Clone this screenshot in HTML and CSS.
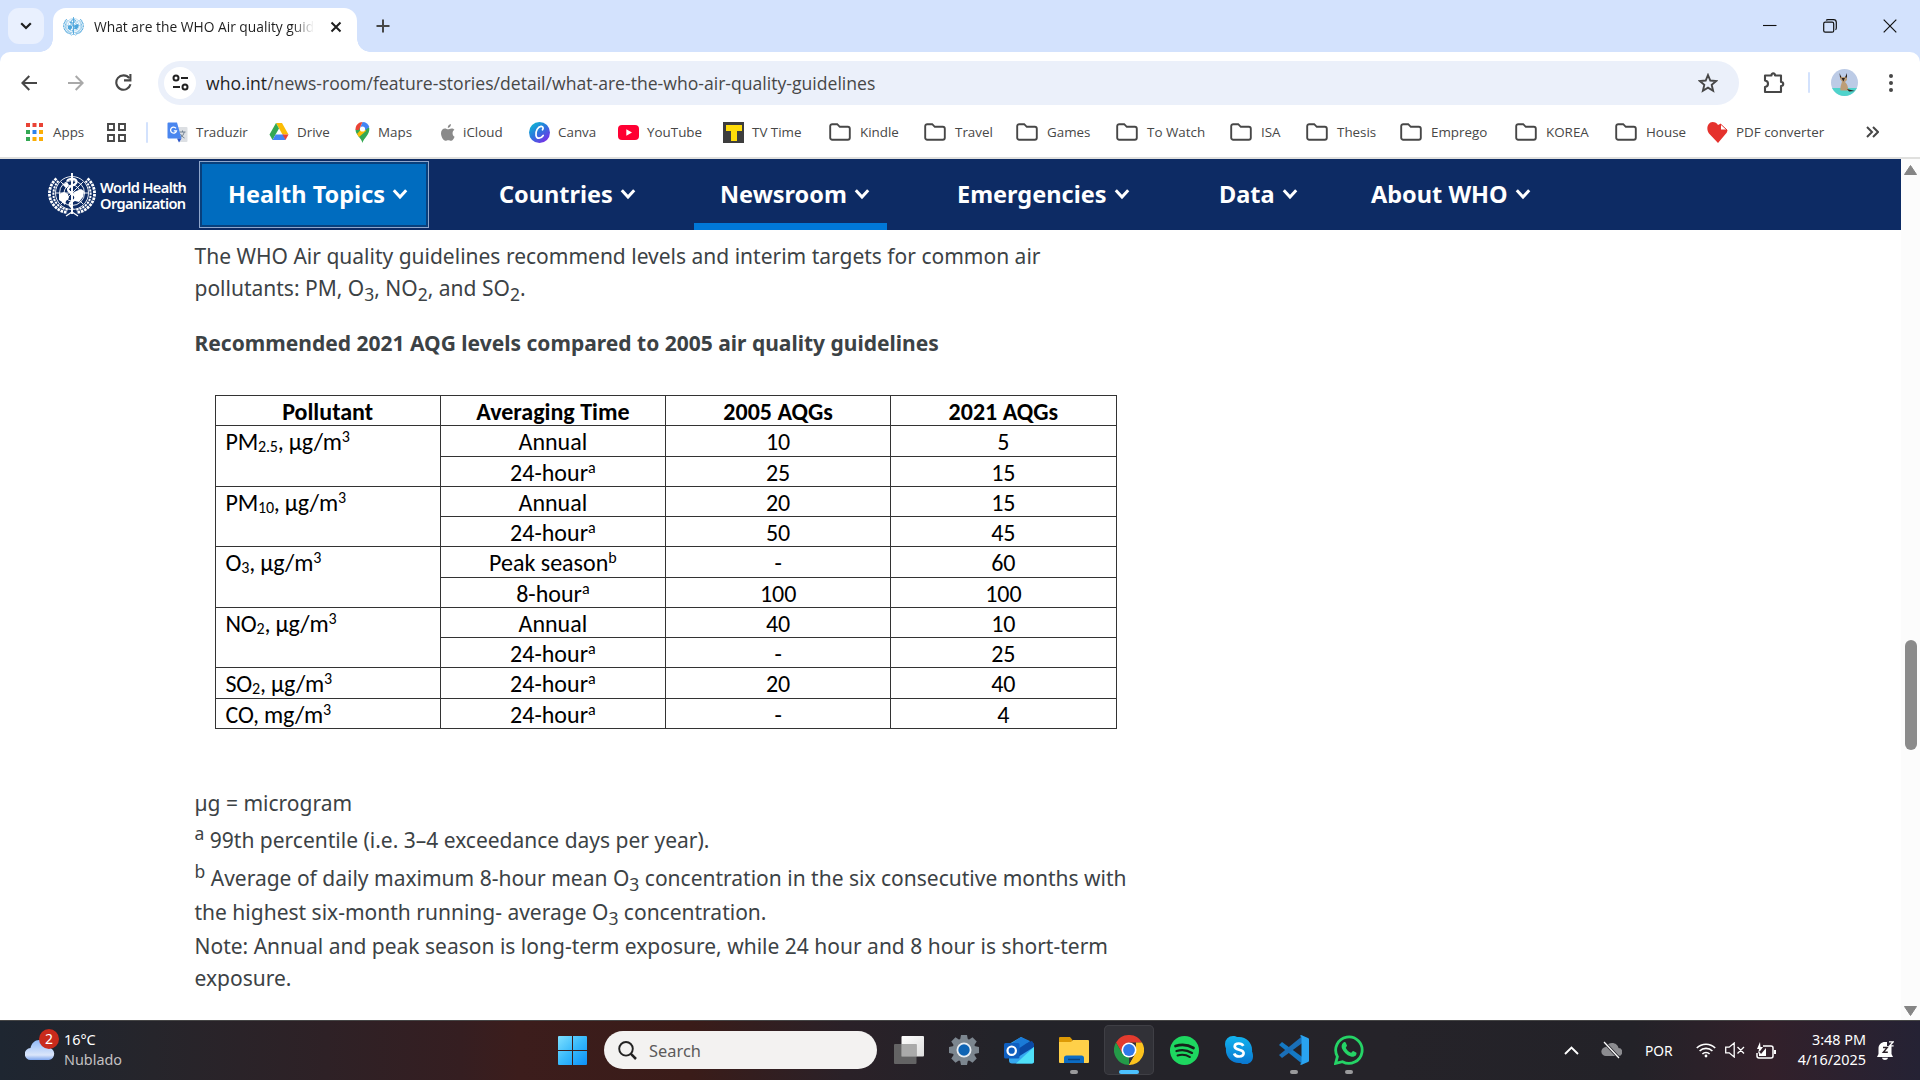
FILE: index.html
```
<!DOCTYPE html>
<html lang="en">
<head>
<meta charset="utf-8">
<title>What are the WHO Air quality guidelines?</title>
<link rel="stylesheet" href="styles.css">
</head>
<body>
<svg class="defs" width="0" height="0">
  <defs>
    <symbol id="folder" viewBox="0 0 22 18"><path d="M1.2 3.2a2 2 0 0 1 2-2h5l2.6 2.6h8a2 2 0 0 1 2 2v8.900a2 2 0 0 1-2 2H3.200a2 2 0 0 1-2-2z" fill="none" stroke="#474747" stroke-width="1.9"/></symbol>
    <symbol id="chev" viewBox="0 0 16 12"><path d="M1.800 2.300L8 9l6.200-6.700" fill="none" stroke="#fff" stroke-width="3"/></symbol>
    <symbol id="emblem" viewBox="0 0 48 44">
      <g fill="none" stroke="currentColor">
        <g stroke-width=".9"><circle cx="24" cy="20" r="16.500"/><circle cx="24" cy="20" r="12.500"/><circle cx="24" cy="20" r="8"/><path d="M8 20h32M24 4v34M13 9l22 22M35 9L13 31"/></g>
        <path d="M8.500 5.500C0 13-1 25 6.500 33c3.500 4 8 6 13 6.500" stroke-width="2.800" stroke-dasharray="2.600 .9"/>
        <path d="M10.500 8C4.500 14 3.500 25 9 31c3.500 4 7 5 11 6" stroke-width="2" stroke-dasharray="2.200 1"/>
        <path d="M39.500 5.500C48 13 49 25 41.500 33c-3.500 4-8 6-13 6.500" stroke-width="2.800" stroke-dasharray="2.600 .9"/>
        <path d="M37.500 8c6 6 7 17 1.500 23-3.500 4-7 5-11 6" stroke-width="2" stroke-dasharray="2.200 1"/>
        <path d="M18 43l6-4 6 4" stroke-width="1.300"/>
        <path d="M24 0v41" stroke-width="1.900"/>
        <path d="M19 8c2-3 9-3 9.500.500C29 13 20 12 20 16.500c0 4 7.500 3.500 7.500 8 0 4-6 3.500-6 7 0 2 3 2.500 3 4.500" stroke-width="2.100"/>
      </g>
      <path d="M11 21l5-2 4 2 1 4-3 3-1 4-3-3-3-2zM26 19l7-3 3 2-1 6-4 5-4-1zM15 12l4-3 2 3-3 3z" fill="currentColor"/>
    </symbol>
  </defs>
</svg>

<header class="browser">
  <div class="tabstrip">
    <button class="tab-search"><svg width="12" height="8" viewBox="0 0 12 8"><path d="M1.200 1.200L6 6l4.800-4.800" fill="none" stroke="#1f1f1f" stroke-width="2.200"/></svg></button>
    <div class="tab">
      <svg class="favicon" width="21" height="19"><use href="#emblem"/></svg>
      <span class="tab-title">What are the WHO Air quality guidelines?</span>
      <svg class="tab-close" width="12" height="12" viewBox="0 0 12 12"><path d="M1.500 1.500l9 9m0-9l-9 9" stroke="#1f1f1f" stroke-width="2"/></svg>
    </div>
    <svg class="newtab" width="14" height="14" viewBox="0 0 14 14"><path d="M7 .5v13M.5 7h13" stroke="#474747" stroke-width="2"/></svg>
    <div class="winctl">
      <svg width="14" height="14" viewBox="0 0 14 14"><path d="M0 6.500h13.500" stroke="#111" stroke-width="1.100"/></svg>
      <svg width="14" height="14" viewBox="0 0 14 14" fill="none" stroke="#111" stroke-width="1.200"><rect x=".7" y="3.200" width="10" height="10" rx="1.500"/><path d="M3.200 1.500C3.500.9 4 .7 5 .7h5.500c2 0 2.800.8 2.800 2.800V9c0 1-.3 1.400-.8 1.800"/></svg>
      <svg width="14" height="14" viewBox="0 0 14 14"><path d="M.7.7l12.600 12.600M13.300.7L.7 13.300" stroke="#111" stroke-width="1.200"/></svg>
    </div>
  </div>

  <div class="toolbar">
    <div class="navbtns">
      <svg width="16" height="16" viewBox="0 0 16 16" fill="none" stroke="#474747" stroke-width="2"><path d="M16 8H1.500M8.300 1L1.400 8l6.900 7"/></svg>
      <svg width="16" height="16" viewBox="0 0 16 16" fill="none" stroke="#a9a9a9" stroke-width="2"><path d="M0 8h14.500M7.700 1l6.900 7-6.900 7"/></svg>
      <svg width="17" height="17" viewBox="0 0 17 17" fill="none" stroke="#474747" stroke-width="2.100"><path d="M15.500 10.300a7.200 7.200 0 1 1-1.300-6.200"/><path d="M15.400 0v6.400H9" /></svg>
    </div>
    <div class="omnibox">
      <span class="site-info"><svg width="17" height="17" viewBox="0 0 17 17" fill="none" stroke="#222" stroke-width="2"><circle cx="4" cy="4" r="2.500"/><path d="M9 4h7M1 13h7"/><circle cx="13" cy="13" r="2.500"/></svg></span>
      <span class="url"><b>who.int</b>/news-room/feature-stories/detail/what-are-the-who-air-quality-guidelines</span>
      <svg class="star" width="20" height="20" viewBox="0 0 20 20"><path d="M10 2l2.300 5.500 5.900.5-4.500 3.900 1.400 5.800L10 14.600l-5.100 3.100 1.400-5.800L1.800 8l5.900-.5z" fill="none" stroke="#474747" stroke-width="1.900"/></svg>
    </div>
    <svg class="ext" width="22" height="23" viewBox="0 0 22 23"><path d="M2 4.500h6.500C8 1.700 12.500 1.700 12 4.500h6V11c3 0 3 4 0 4v6H2v-5c4-.5 4-6 0-6.500z" fill="none" stroke="#474747" stroke-width="2.100" stroke-linejoin="round"/></svg>
    <i class="sep"></i>
    <svg class="avatar" width="27" height="27" viewBox="0 0 27 27"><defs><clipPath id="av"><circle cx="13.500" cy="13.500" r="13.500"/></clipPath></defs><g clip-path="url(#av)"><path fill="#bccbe6" d="M0 0h27v27H0z"/><path fill="#4fd3cb" d="M0 19h27v8H0z"/><path d="M9 7l2 1h3l2-1v4l-2 2c2.500 2 3 5 3 7l2 1.500H9.500c-.5-4 1.500-8 1.500-9L9 10z" fill="#bd9d77"/><path d="M8.500 4l2 4.500H9zM16 4l-2 4.500h2zM10.500 9h3.500l-1.700 3.500zM16 20l8 2-6 .5z" fill="#2b2320"/></g></svg>
    <svg class="menu" width="4" height="18" viewBox="0 0 4 18" fill="#474747"><circle cx="2" cy="2" r="2"/><circle cx="2" cy="9" r="2"/><circle cx="2" cy="16" r="2"/></svg>
  </div>

  <nav class="bookmarks">
    <a class="apps"><svg width="17" height="18" viewBox="0 0 17 18"><path fill="#e94235" d="M0 0h4v4H0zM6.500 0h4v4h-4zM13 0h4v4h-4z"/><path fill="#34a853" d="M0 7h4v4H0zM0 14h4v4H0z"/><path fill="#2b82ee" d="M6.500 7h4v4h-4z"/><path fill="#fbae06" d="M13 7h4v4h-4zM6.500 14h4v4h-4zM13 14h4v4h-4z"/></svg>Apps</a>
    <a><svg width="19" height="19" viewBox="0 0 19 19" fill="none" stroke="#474747" stroke-width="1.900"><path d="M1 1h6v6H1zM12 1h6v6h-6zM1 12h6v6H1zM12 12h6v6h-6z"/></svg></a>
    <i class="sep"></i>
    <a><svg width="21" height="21" viewBox="0 0 21 21"><path fill="#dcdfe3" d="M8 5h11.500a1 1 0 0 1 1 1v13a1 1 0 0 1-1 1H12z"/><path d="M12.500 10h6M15.500 8.500V10m1.700 0c-.5 2.500-2 4.500-3.700 5.500m0-3.500c.8 1.500 2 3 4 4" stroke="#6f7f90" fill="none"/><path fill="#4a86ef" d="M1.500.5H10l4.500 16H1.500a1 1 0 0 1-1-1v-14a1 1 0 0 1 1-1z"/><path fill="#2d57c9" d="M10 16.500h4.500L12 20.500z"/><path d="M9 6.300a3 3 0 1 0 .5 2.500H6.800" fill="none" stroke="#fff" stroke-width="1.300"/></svg>Traduzir</a>
    <a><svg width="20" height="18" viewBox="0 0 20 18"><path fill="#fbbc05" d="M7 0h6l6.500 11.500h-6z"/><path fill="#34a853" d="M7 0l3 5.500L3.500 17 .5 11.500z"/><path fill="#4285f4" d="M6.700 11.500h8L16.500 17h-13z"/><path fill="#ea4335" d="M13.500 11.500h6l-3 5.500z"/></svg>Drive</a>
    <a><svg width="15" height="21" viewBox="0 0 15 21"><path fill="#34a853" d="M7.500 21C6.500 16 .5 13 .5 7.500L11 3l3.300 3C15 13 8.500 16 7.500 21z"/><path fill="#fbbc05" d="M2 12L9 4l2 5-7 6z"/><path fill="#4285f4" d="M7.500 0c3.500 0 6 2 6.800 5L9 9 5 6z"/><path fill="#ea4335" d="M7.500 0L4 8 .6 8C0 3 4 0 7.500 0z"/><circle cx="7.500" cy="7" r="2.600" fill="#fff"/></svg>Maps</a>
    <a><svg width="14" height="17" viewBox="0 0 14 17" fill="#8a8a8a"><path d="M9.900 0c.2 2-1.300 3.800-3.100 3.900C6.600 2 8.200.2 9.900 0zM13.600 12.800c-.8 2-2 4-3.500 4-1.100 0-1.500-.6-2.800-.6s-1.800.6-2.800.6C2.300 16.800 0 12.500 0 9.300c0-3 1.900-4.800 3.900-4.800 1.300 0 2.300.8 3.200.8.800 0 2-.9 3.600-.9 1 0 2 .5 2.700 1.400-2.600 1.500-2.200 5.900.2 7z"/></svg>iCloud</a>
    <a><svg width="21" height="21" viewBox="0 0 21 21"><defs><linearGradient id="cv" x1="0" y1="0" x2=".8" y2="1"><stop stop-color="#07c6d0"/><stop offset=".5" stop-color="#2a78dd"/><stop offset="1" stop-color="#7d2ae8"/></linearGradient></defs><circle cx="10.500" cy="10.500" r="10.500" fill="url(#cv)"/><path d="M13.500 7.800c1.300-1.800.4-3.700-1.500-3.500-3 .4-5.700 5-5 9 .7 4 5 3.700 7.200.2" fill="none" stroke="#fff" stroke-width="1.700" stroke-linecap="round"/></svg>Canva</a>
    <a><svg width="21" height="15" viewBox="0 0 21 15"><rect width="21" height="15" rx="4" fill="#f03"/><path fill="#fff" d="M8.300 4.300l5.700 3.200-5.700 3.200z"/></svg>YouTube</a>
    <a><svg width="21" height="21" viewBox="0 0 21 21"><path fill="#3d3d3d" d="M0 0h21v21H0z"/><path fill="#ffdc0a" d="M3 3h16v6h-5v10H8V9H3z"/></svg>TV Time</a>
    <a class="dir"><svg width="22" height="18"><use href="#folder"/></svg>Kindle</a>
    <a class="dir"><svg width="22" height="18"><use href="#folder"/></svg>Travel</a>
    <a class="dir"><svg width="22" height="18"><use href="#folder"/></svg>Games</a>
    <a class="dir"><svg width="22" height="18"><use href="#folder"/></svg>To Watch</a>
    <a class="dir"><svg width="22" height="18"><use href="#folder"/></svg>ISA</a>
    <a class="dir"><svg width="22" height="18"><use href="#folder"/></svg>Thesis</a>
    <a class="dir"><svg width="22" height="18"><use href="#folder"/></svg>Emprego</a>
    <a class="dir"><svg width="22" height="18"><use href="#folder"/></svg>KOREA</a>
    <a class="dir"><svg width="22" height="18"><use href="#folder"/></svg>House</a>
    <a><svg width="21" height="21" viewBox="0 0 21 21"><path fill="#e5322d" d="M11 21L2 11.500C-1.500 7 1 0 5.500 0 8 0 10 1.200 11 3l2-1v6h7.500c-.3 2-.8 2.800-1.500 3.500z"/><path d="M13.500 2v6h6.500z" fill="#fff" stroke="#e5322d"/></svg>PDF converter</a>
    <a><svg width="13" height="12" viewBox="0 0 13 12" fill="none" stroke="#474747" stroke-width="2"><path d="M1 1l5 5-5 5M7 1l5 5-5 5"/></svg></a>
  </nav>
</header>

<div class="viewport">
  <div class="page">
    <nav class="who-nav">
      <a class="who-logo"><svg width="48" height="44"><use href="#emblem"/></svg><span>World Health<br>Organization</span></a>
      <a class="item focused">Health Topics<svg width="16" height="12"><use href="#chev"/></svg></a>
      <a class="item">Countries<svg width="16" height="12"><use href="#chev"/></svg></a>
      <a class="item current">Newsroom<svg width="16" height="12"><use href="#chev"/></svg></a>
      <a class="item">Emergencies<svg width="16" height="12"><use href="#chev"/></svg></a>
      <a class="item">Data<svg width="16" height="12"><use href="#chev"/></svg></a>
      <a class="item">About WHO<svg width="16" height="12"><use href="#chev"/></svg></a>
    </nav>
    <main class="article">
      <p>The WHO Air quality guidelines recommend levels and interim targets for common air<br>pollutants: PM, O<sub>3</sub>, NO<sub>2</sub>, and SO<sub>2</sub>.</p>
      <h2>Recommended 2021 AQG levels compared to 2005 air quality guidelines</h2>
      <div class="aqg">
        <div class="th">Pollutant</div><div class="th">Averaging Time</div><div class="th">2005 AQGs</div><div class="th">2021 AQGs</div>
        <div class="pol two">PM<sub>2.5</sub>, µg/m<sup>3</sup></div><div>Annual</div><div>10</div><div>5</div>
        <div>24-hour<sup>a</sup></div><div>25</div><div>15</div>
        <div class="pol two">PM<sub>10</sub>, µg/m<sup>3</sup></div><div>Annual</div><div>20</div><div>15</div>
        <div>24-hour<sup>a</sup></div><div>50</div><div>45</div>
        <div class="pol two">O<sub>3</sub>, µg/m<sup>3</sup></div><div>Peak season<sup>b</sup></div><div>-</div><div>60</div>
        <div>8-hour<sup>a</sup></div><div>100</div><div>100</div>
        <div class="pol two">NO<sub>2</sub>, µg/m<sup>3</sup></div><div>Annual</div><div>40</div><div>10</div>
        <div>24-hour<sup>a</sup></div><div>-</div><div>25</div>
        <div class="pol">SO<sub>2</sub>, µg/m<sup>3</sup></div><div>24-hour<sup>a</sup></div><div>20</div><div>40</div>
        <div class="pol">CO, mg/m<sup>3</sup></div><div>24-hour<sup>a</sup></div><div>-</div><div>4</div>
      </div>
      <p class="notes">µg = microgram<br><sup>a</sup> 99th percentile (i.e. 3–4 exceedance days per year).<br><sup>b</sup> Average of daily maximum 8-hour mean O<sub>3</sub> concentration in the six consecutive months with<br>the highest six-month running- average O<sub>3</sub> concentration.<br>Note: Annual and peak season is long-term exposure, while 24 hour and 8 hour is short-term<br>exposure.</p>
    </main>
  </div>
  <div class="scrollbar">
    <svg width="13" height="10" viewBox="0 0 13 10"><path d="M6.500 0.500L12.500 9.500H.5z" fill="#858585" stroke="#858585" stroke-linejoin="round"/></svg>
    <i class="thumb"></i>
    <svg width="13" height="10" viewBox="0 0 13 10"><path d="M6.500 9.500L.5.500h12z" fill="#858585" stroke="#858585" stroke-linejoin="round"/></svg>
  </div>
</div>

<footer class="taskbar">
  <div class="weather">
    <div class="cloud">
      <svg width="30" height="20" viewBox="0 0 30 20"><defs><linearGradient id="cl" x1="0" y1="0" x2="0" y2="1"><stop stop-color="#8fb9f8"/><stop offset=".75" stop-color="#dbe6fa"/><stop offset="1" stop-color="#7ea6ee"/></linearGradient></defs><path fill="url(#cl)" d="M6 20a6 6 0 0 1-.5-12C6.500 3 10 0 14 0c4.500 0 8 3 9 7.500A6.300 6.300 0 0 1 24 20z"/></svg>
      <span class="badge">2</span>
    </div>
    <div class="wtext"><span>16°C</span><span class="dim">Nublado</span></div>
  </div>
  <svg class="start" width="29" height="29" viewBox="0 0 29 29"><defs><linearGradient id="st" x1="0" y1="0" x2="1" y2="1"><stop stop-color="#7fe0ff"/><stop offset=".5" stop-color="#37b9fb"/><stop offset="1" stop-color="#0c90f8"/></linearGradient></defs><path fill="url(#st)" d="M0 1a1 1 0 0 1 1-1h13v14H0zM15 0h13a1 1 0 0 1 1 1v13H15zM0 15h14v14H1a1 1 0 0 1-1-1zM15 15h14v13a1 1 0 0 1-1 1H15z"/></svg>
  <div class="search"><svg width="19" height="19" viewBox="0 0 19 19" fill="none" stroke="#222"><circle cx="8" cy="7.800" r="6.800" stroke-width="1.900"/><path d="M12.700 12.700l5.300 5.300" stroke-width="2.500"/></svg>Search</div>
  <div class="tasks">
    <span><svg width="30" height="28" viewBox="0 0 30 28"><defs><linearGradient id="tv" x2="1" y2="1"><stop stop-color="#fff"/><stop offset="1" stop-color="#ddd"/></linearGradient></defs><rect x="7.500" width="22.500" height="20.500" rx="1" fill="url(#tv)"/><rect y="8" width="22.500" height="20" rx="1" fill="#6f6f6f" fill-opacity=".85"/><path d="M7.500 8h15v12.500h-15z" fill="#aaa"/></svg></span>
    <span><svg width="30" height="30" viewBox="0 0 30 30"><g fill="#7c868f"><circle cx="15" cy="15" r="11.500"/><g id="tooth"><path d="M12 0h6l1.200 6h-8.400zM12 30h6l1.200-6h-8.400z"/></g><use href="#tooth" transform="rotate(45 15 15)"/><use href="#tooth" transform="rotate(90 15 15)"/><use href="#tooth" transform="rotate(135 15 15)"/></g><circle cx="15" cy="15" r="7.500" fill="#e9eef3"/><circle cx="15" cy="15" r="5.700" fill="#0f64b4"/></svg></span>
    <span><svg width="30" height="27" viewBox="0 0 30 27"><path fill="#36a8f0" d="M5 7L17 0l13 7v17.500a2 2 0 0 1-2 2H8a3 3 0 0 1-3-3z"/><path fill="#0a4aa5" d="M11 9l17-5 2 3v3L14 20z"/><path fill="#1a7bd8" d="M8 6l9-6 9 4-12 8z"/><path fill="#4fe0f8" d="M30 10v14.500a2 2 0 0 1-2 2H12z"/><rect y="6" width="15.500" height="15.500" rx="1.500" fill="#0f5fc0"/><circle cx="7.700" cy="13.700" r="4.200" fill="none" stroke="#fff" stroke-width="2.200"/></svg></span>
    <span class="open"><svg width="30" height="26" viewBox="0 0 30 26"><path fill="#dd9a06" d="M0 1a1 1 0 0 1 1-1h10l2.500 3v4H0z"/><path fill="#ffd049" d="M0 5h12l2-2h15a1 1 0 0 1 1 1v21a1 1 0 0 1-1 1H1a1 1 0 0 1-1-1z"/><path fill="#0c6cc4" d="M5 26v-5a2.500 2.500 0 0 1 2.500-2.500h15A2.500 2.500 0 0 1 25 21v5z"/><path d="M9 22.500h12" stroke="#08427e" stroke-width="1.500"/></svg></span>
    <span class="active"><svg width="30" height="30" viewBox="0 0 30 30"><path fill="#e33b2e" d="M2 7.500A15 15 0 0 1 28 7.500H15L8.500 18.700z"/><path fill="#fcc31e" d="M28 7.500A15 15 0 0 1 15 30l6.500-11.200L22 7.500z"/><path fill="#249a48" d="M2 7.500l6.500 11.300 6.500 3.700L15 30A15 15 0 0 1 2 7.500z"/><path fill="#fcc31e" d="M21.500 18.800L15 30h1l8-10z"/><circle cx="15" cy="15" r="7.500" fill="#fff"/><circle cx="15" cy="15" r="5.900" fill="#2f78e8"/></svg></span>
    <span><svg width="29" height="29" viewBox="0 0 29 29"><circle cx="14.500" cy="14.500" r="14.500" fill="#1ed760"/><g fill="none" stroke="#15221a" stroke-linecap="round"><path d="M5.500 10c6-1.800 13-1 18 2" stroke-width="2.700"/><path d="M6.500 15c5-1.500 11-.8 15.500 1.900" stroke-width="2.300"/><path d="M7.500 19.500c4-1.200 9-.6 12.500 1.600" stroke-width="1.900"/></g></svg></span>
    <span><svg width="28" height="28" viewBox="0 0 28 28"><defs><linearGradient id="sk" x2="0" y2="1"><stop stop-color="#12b4ef"/><stop offset="1" stop-color="#0a75cf"/></linearGradient></defs><path fill="url(#sk)" d="M8 0c2 0 3 .5 4.500 1C21 0 28 7 27 15.500c.5 1 1 2.500 1 4.500a8 8 0 0 1-12.500 7C7 28 0 21 1 12.500.500 11 0 10 0 8a8 8 0 0 1 8-8z"/><path d="M18.300 9.800c-1-1.900-2.800-2.300-4.500-2.300-2.300 0-4.100 1.100-4.100 3 0 4.400 8.900 2 8.900 6.600 0 2.200-2 3.400-4.500 3.400-2.200 0-4.200-.9-5-3" fill="none" stroke="#fff" stroke-width="2.700"/></svg></span>
    <span class="open"><svg width="30" height="30" viewBox="0 0 30 30"><path d="M0 10l3-3L24 22.500v7z" fill="#1479c4"/><path d="M0 20l3 3L24 7.500v-7z" fill="#1a6fb8"/><path fill="#29a3f0" d="M22 0l7 3a1.500 1.500 0 0 1 1 1.500v21a1.500 1.500 0 0 1-1 1.500l-7 3-1-1 1.500-1V2L21 1z"/></svg></span>
    <span class="open"><svg width="30" height="30" viewBox="0 0 30 30"><path d="M1.600 28.400l1.800-6.800A13.200 13.200 0 1 1 8.500 26.700z" fill="none" stroke="#25d366" stroke-width="2.800"/><path d="M9.500 7.500c1-.8 2-.5 2.300.2l1.200 2.800c.2.600-1.400 2-1.200 2.400 1.200 2.300 2.900 3.900 5.200 4.900.6.200 1.700-1.900 2.200-1.700l3 1.500c.5.300.4 1.800-.3 2.700-1.200 1.400-3.200 1.800-5 1.200-4.500-1.500-7.300-4.300-8.900-8-.8-2-.4-4.500 1.500-6z" fill="#25d366"/></svg></span>
  </div>
  <div class="tray">
    <svg width="15" height="9" viewBox="0 0 15 9"><path d="M1 8l6.500-6.500L14 8" fill="none" stroke="#fff" stroke-width="1.900"/></svg>
    <svg width="21" height="18" viewBox="0 0 21 18"><path d="M5 15a4.500 4.500 0 0 1-.3-9C6 3 8.500 2 11 2c3.500 0 6 2.300 6.500 5A4 4 0 0 1 17 15z" fill="#8c8c90"/><path d="M3 1l15 16" stroke="#26252b" stroke-width="3"/><path d="M3 1l15 16" stroke="#fff" stroke-width="1.200"/></svg>
    <span class="lang">POR</span>
    <svg width="20" height="16" viewBox="0 0 20 16" fill="none" stroke="#fff" stroke-width="1.600"><path d="M.8 6a13 13 0 0 1 18.400 0M3.600 9a9 9 0 0 1 12.800 0M6.400 12a5 5 0 0 1 7.200 0"/><circle cx="10" cy="14" r="1.400" fill="#fff" stroke="none"/></svg>
    <svg width="20" height="16" viewBox="0 0 20 16" fill="none" stroke="#fff" stroke-width="1.300"><path d="M.7 5.200h3.500l5-4.200v14l-5-4.200H.7zM12.500 5l6.500 6.500m0-6.500l-6.500 6.500"/></svg>
    <svg width="20" height="17" viewBox="0 0 20 17"><path d="M7 4h8a2 2 0 0 1 2 2v8a2 2 0 0 1-2 2H3a2 2 0 0 1-2-2v-3" fill="none" stroke="#fff" stroke-width="1.500"/><path d="M18 8h2v4h-2zM3 14V9l2 3 5-6v8zM4 0L1 7h2l-1 5 5-7H4.500z" fill="#fff"/></svg>
    <div class="clock"><span>3:48 PM</span><span>4/16/2025</span></div>
    <svg width="17" height="19" viewBox="0 0 17 19"><path d="M1.500 13V7.500C1.500 3.500 4.500 1 8 1h2v4h4.500v8l1.500 3H0zM5 16.700h6c-.5 3-5.500 3-6 0z" fill="#fff"/><path d="M12 .8h4.200l-3.600 4h4" stroke="#fff" fill="none" stroke-width="1.300"/><path d="M6 6.500h4.300l-4 4.700h4.500" stroke="#2b2129" fill="none" stroke-width="1.400"/></svg>
  </div>
</footer>
</body>
</html>
```
FILE: styles.css
```
* { box-sizing: border-box; }
body {
  margin: 0;
  width: 1920px;
  height: 1080px;
  overflow: hidden;
  display: flex;
  flex-direction: column;
  background: #fff;
  font-family: "Noto Sans", "Open Sans", sans-serif;
}
.defs { position: absolute; }
svg { display: block; flex: none; }
button { border: 0; padding: 0; }

/* Browser chrome */
.browser {
  height: 159px;
  flex: none;
  background: #d3e2fd;
  border-bottom: 2px solid #e0e0de;
  font-family: "Open Sans", "Noto Sans", sans-serif;
}
.tabstrip { height: 52px; display: flex; align-items: center; padding-left: 8px; }
.tab-search {
  width: 36px; height: 36px;
  border-radius: 11px;
  background: #e9f0fe;
  display: grid;
  place-items: center;
}
.tab {
  position: relative;
  width: 304px; height: 44px;
  margin-left: 9px;
  align-self: flex-end;
  background: #fff;
  border-radius: 13px 13px 0 0;
  display: flex;
  align-items: center;
  padding: 0 0 7px 10px;
  font-size: 13.8px;
  color: #1f1f1f;
}
.tab::before, .tab::after {
  content: "";
  position: absolute;
  bottom: 0;
  width: 13px; height: 13px;
}
.tab::before { left: -13px; background: radial-gradient(circle at 0 0, transparent 12.5px, #fff 13px); }
.tab::after { right: -13px; background: radial-gradient(circle at 100% 0, transparent 12.5px, #fff 13px); }
.favicon { color: #4ea6dc; }
.tab-title {
  width: 220px;
  margin: 0 15px 0 10px;
  overflow: hidden;
  white-space: nowrap;
  -webkit-mask-image: linear-gradient(90deg, #000 90%, transparent);
  mask-image: linear-gradient(90deg, #000 90%, transparent);
}
.tab-close { margin-left: 1px; }
.newtab { margin-left: 19px; }
.winctl { margin-left: auto; display: flex; gap: 46px; padding-right: 23px; }

.toolbar {
  height: 60px;
  background: #fff;
  border-radius: 10px 10px 0 0;
  display: flex;
  align-items: center;
  padding-top: 1px;
}
.navbtns { width: 158px; display: flex; gap: 31px; padding-left: 21px; align-items: center; }
.omnibox {
  width: 1581px; height: 44px;
  border-radius: 22px;
  background: #ebf0fa;
  display: flex;
  align-items: center;
  padding: 0 21px 0 6px;
}
.site-info {
  width: 32px; height: 32px;
  border-radius: 50%;
  background: #fff;
  display: grid;
  place-items: center;
}
.url { margin-left: 10px; font-size: 17.6px; color: #474747; line-height: 24px; }
.url b { font-weight: 400; color: #1f1f1f; }
.star { margin-left: auto; }
.ext { margin-left: 24px; }
.sep { width: 2px; height: 21px; background: #d3e2fd; border-radius: 1px; }
.toolbar .sep { margin: 0 21px 0 23px; }
.menu { margin-left: 31px; }

.bookmarks {
  height: 45px;
  background: #fff;
  padding: 0 0 5px 26px;
  display: grid;
  grid-template-columns: 81px 39px 21px 102px 86px 86px 88px 89px 105px 106px 95px 92px 100px 114px 76px 94px 115px 100px 92px 159px 20px;
  align-items: center;
  font-size: 13.4px;
  color: #474747;
}
.bookmarks a { display: flex; align-items: center; gap: 8px; white-space: nowrap; }
.bookmarks .apps { gap: 10px; }
.bookmarks .dir { gap: 9px; }

/* Page */
.viewport { flex: 1; display: flex; min-height: 0; }
.page { width: 1901px; }
.who-nav {
  height: 71px;
  background: #0d2b64;
  display: grid;
  grid-template-columns: 199px 274px 221px 237px 262px 152px 260px;
  color: #fff;
}
.who-logo {
  display: flex;
  align-items: center;
  gap: 4px;
  padding-left: 48px;
  font-size: 14.6px;
  font-weight: 600;
  line-height: 16px;
  letter-spacing: -.6px;
}
.item {
  display: flex;
  align-items: center;
  gap: 7px;
  padding: 0 0 1px 26px;
  font-size: 23.5px;
  font-weight: 700;
  white-space: nowrap;
}
.focused {
  width: 230px; height: 67px;
  margin-top: 2px;
  padding: 0 0 1px 28px;
  border: 1px solid #8fa6cc;
  box-shadow: inset 0 0 0 2px #083f7c;
  background: #006cbf;
}
.current { width: 193px; box-shadow: inset 0 -7px #0078d8; }

.article {
  padding: 11px 0 0 194.5px;
  width: 1200px;
  font-size: 21px;
  line-height: 31.5px;
  color: #3c4245;
  white-space: nowrap;
}
.article p { margin: 0; }
.article h2 { margin: 17px 0 0; font-size: 21px; line-height: 32px; }
.aqg {
  display: grid;
  grid-template-columns: repeat(4, 225.25px);
  grid-template-rows: repeat(11, 30.24px);
  width: 902px;
  margin: 36px 0 0 20px;
  border: solid #333;
  border-width: 0 1px 1px 0;
  font: 24px/32px Carlito, Lato, sans-serif;
  color: #000;
}
.aqg div { border: solid #333; border-width: 1px 0 0 1px; text-align: center; }
.aqg .th { font-weight: 700; }
.aqg .pol { text-align: left; padding-left: 10px; letter-spacing: -.2px; }
.aqg .two { grid-row: span 2; }
.aqg sub, .aqg sup { font-size: 16px; line-height: 0; }
.aqg sub { vertical-align: -2px; }
.aqg sup { vertical-align: 8px; }
.article .notes { margin-top: 59px; }
.notes sup { line-height: 29px; }
.notes sub { line-height: 25px; }

.scrollbar {
  width: 19px;
  background: #fcfcfc;
  display: flex;
  flex-direction: column;
  align-items: center;
  padding: 6px 0 4px;
}
.thumb { width: 12px; height: 110px; margin: 465px 0 auto; border-radius: 6px; background: #8b8b8b; }

/* Taskbar */
.taskbar {
  height: 60px;
  flex: none;
  border-top: 1px solid #454545;
  padding-bottom: 1px;
  background: linear-gradient(90deg, #1e2631 0, #26252b 8%, #2e2126 17%, #351e21 24%, #3c1d1c 27%, #3a1c19 36%, #2a2128 44%, #232329 52%, #252329 72%, #232228 85%, #32202a 92%, #252234 100%);
  display: flex;
  align-items: center;
  color: #fff;
  font-size: 14.4px;
}
.weather { width: 558px; display: flex; padding-left: 25px; align-items: center; }
.cloud { position: relative; width: 39px; }
.badge {
  position: absolute;
  left: 14px; top: -11px;
  width: 20px; height: 20px;
  border-radius: 50%;
  background: #c92a1c;
  font-size: 14px;
  line-height: 20px;
  text-align: center;
}
.wtext, .clock { display: flex; flex-direction: column; line-height: 20px; padding-bottom: 1px; }
.dim { color: #c3c0c2; }
.search {
  width: 273px; height: 38px;
  margin-left: 17px;
  border-radius: 19px;
  background: #f3f2f1;
  display: flex;
  align-items: center;
  gap: 12px;
  padding-left: 14px;
  color: #5c5a5a;
  font-size: 16.4px;
}
.tasks { display: flex; gap: 5px; margin-left: 7px; }
.tasks span { position: relative; width: 50px; height: 50px; display: grid; place-items: center; border-radius: 5px; }
.tasks .active { background: #313137; box-shadow: inset 0 0 0 1px #3f3f45; }
.tasks .open::after, .tasks .active::after {
  content: "";
  position: absolute;
  left: 21px; bottom: 1px;
  width: 8px; height: 4px;
  border-radius: 2px;
  background: #9a9a9c;
}
.tasks .active::after { left: 15px; width: 20px; background: #4cc2ff; }
.tray { margin-left: auto; display: flex; align-items: center; padding-right: 26px; }
.tray svg:nth-of-type(2) { margin-left: 22px; }
.lang { width: 51px; margin-left: 23px; font-size: 13.8px; }
.tray svg:nth-of-type(4) { margin-left: 9px; }
.tray svg:nth-of-type(5) { margin-left: 11px; }
.clock { width: 90px; align-items: flex-end; margin-right: 11px; }
```
